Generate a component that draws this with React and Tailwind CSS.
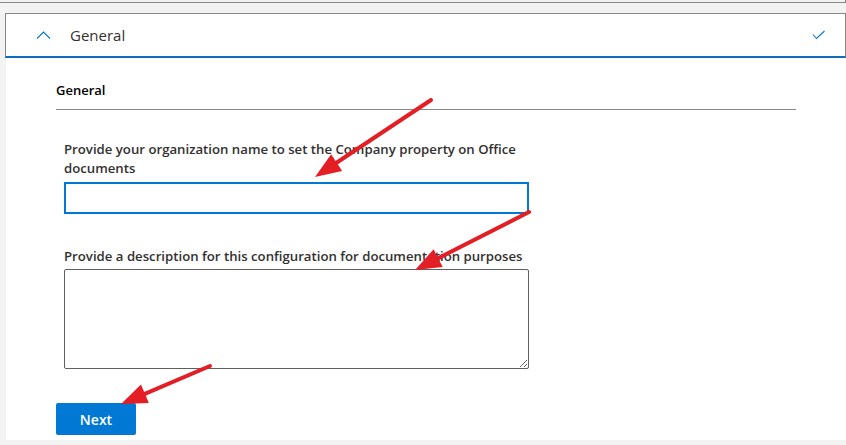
import React from 'react';

// red callout arrows drawn over the form
const arrows = [
    { from: [431, 100], to: [315, 177] },
    { from: [529, 212], to: [415, 270] },
    { from: [210, 366], to: [121, 404] },
];

const Arrow = ({ from, to }) => {
    const [x1, y1] = from;
    const [x2, y2] = to;
    const len = Math.hypot(x2 - x1, y2 - y1);
    const ux = (x2 - x1) / len;
    const uy = (y2 - y1) / len;
    const headLen = 26;
    const half = 10;
    const bx = x2 - ux * headLen;
    const by = y2 - uy * headLen;
    const p1 = `${bx - uy * half},${by + ux * half}`;
    const p2 = `${bx + uy * half},${by - ux * half}`;
    return (
        <g>
            <line x1={x1} y1={y1} x2={bx + ux * 2} y2={by + uy * 2} stroke="#e31e24" strokeWidth="4" strokeLinecap="round" />
            <polygon points={`${x2},${y2} ${p1} ${p2}`} fill="#e31e24" />
        </g>
    );
};

const App = () => {
    return (
        <div
            className="relative h-[445px] w-[846px] overflow-hidden bg-[#f3f3f3] text-[#323130]"
            style={{ fontFamily: '"Open Sans", "Noto Sans", sans-serif' }}
        >
            {/* bottom edge of the previous section */}
            <div className="h-[3px] w-[846px] border-b border-r border-[#8a8886]" />

            {/* accordion header */}
            <div className="mt-[10px] ml-[5px] flex h-[45px] w-[841px] items-center border border-[#8a8886] border-b-2 border-b-[#0f6cbd] bg-white">
                <svg width="16" height="10" viewBox="0 0 16 10" className="ml-[30px]">
                    <polyline points="1,8.5 7.5,2 14,8.5" fill="none" stroke="#0078d4" strokeWidth="1.1" />
                </svg>
                <span className="ml-[18px] text-[15px] leading-none">General</span>
                <svg width="14" height="10" viewBox="0 0 14 10" className="ml-auto mr-[19px]">
                    <polyline points="1,4.5 4.5,8.5 12.5,1" fill="none" stroke="#0078d4" strokeWidth="1.1" />
                </svg>
            </div>

            {/* accordion body */}
            <div className="ml-[6px] h-[382px] bg-white pl-[50px]">
                <div className="w-[740px] border-b border-[#8a8886] pt-[22px] pb-[9px]">
                    <h3 className="text-[13px] font-semibold leading-[20px] text-black">General</h3>
                </div>

                <div className="pl-[8px] pt-[30px]">
                    <label className="block w-[465px] text-[13.2px] font-semibold leading-[19px]">
                        Provide your organization name to set the Company property on Office documents
                    </label>
                    <input
                        type="text"
                        className="mt-[4px] block h-[32px] w-[465px] border-2 border-[#0078d4] bg-white outline-none"
                    />

                    <label className="mt-[33px] block w-[470px] text-[13.2px] font-semibold leading-[19px]">
                        Provide a description for this configuration for documentation purposes
                    </label>
                    <textarea className="mt-[3px] block h-[100px] w-[465px] rounded-[2px] border border-[#605e5c] bg-white outline-none" />
                </div>

                <button className="mt-[34px] h-[32px] w-[80px] rounded-[2px] bg-[#0078d4] text-[14px] font-semibold text-white">
                    Next
                </button>
            </div>

            <svg className="pointer-events-none absolute left-0 top-0" width="846" height="445">
                {arrows.map((a, i) => (
                    <Arrow key={i} from={a.from} to={a.to} />
                ))}
            </svg>
        </div>
    );
};

export default App;
